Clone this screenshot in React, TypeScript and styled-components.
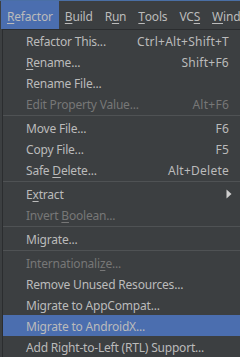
import React from 'react';
import styled, { createGlobalStyle } from 'styled-components';

const GlobalStyle = createGlobalStyle`
  html, body {
    margin: 0;
    padding: 0;
    background: #3c3f41;
    overflow: hidden;
  }
  body {
    width: 240px;
    height: 357px;
    font-family: "Noto Sans", "Noto Sans CJK KR", sans-serif;
    font-size: 12px;
    letter-spacing: -0.2px;
    color: #bbbbbb;
  }
`;

type Entry =
  | { sep: true }
  | { label: string; shortcut?: string; disabled?: boolean; selected?: boolean; submenu?: boolean };

// "&" marks the mnemonic letter
const barMenus = ['&Refactor', '&Build', 'R&un', '&Tools', 'VC&S', '&Window'];

const entries: Entry[] = [
  { label: 'Refactor This...', shortcut: 'Ctrl+Alt+Shift+T' },
  { label: '&Rename...', shortcut: 'Shift+F6' },
  { label: 'Rename File...' },
  { label: 'Edit Property Value...', shortcut: 'Alt+F6', disabled: true },
  { sep: true },
  { label: 'Move File...', shortcut: 'F6' },
  { label: 'Copy File...', shortcut: 'F5' },
  { label: 'Safe &Delete...', shortcut: 'Alt+Delete' },
  { sep: true },
  { label: 'E&xtract', submenu: true },
  { label: 'Invert &Boolean...', disabled: true },
  { sep: true },
  { label: 'Migrate...' },
  { sep: true },
  { label: 'Internationali&ze...', disabled: true },
  { label: 'Remove Unused Resources...' },
  { label: 'Migrate to AppCompat...' },
  { label: 'Migrate to AndroidX...', selected: true },
  { label: 'Add Right-to-Left (RTL) Support...' },
];

const Mnemonic = ({ text }: { text: string }) => {
  const i = text.indexOf('&');
  if (i < 0) return <>{text}</>;
  return (
    <>
      {text.slice(0, i)}
      <Under>{text[i + 1]}</Under>
      {text.slice(i + 2)}
    </>
  );
};

const Arrow = () => (
  <svg width="6" height="10" viewBox="0 0 6 10">
    <path d="M0.5 0.5 L5.5 5 L0.5 9.5 Z" fill="#cfcfcf" />
  </svg>
);

const App = () => {
  return (
    <>
      <GlobalStyle />
      <Screen>
        <MenuBar>
          {barMenus.map((m, i) => (
            <BarItem key={m} $active={i === 0}>
              <Mnemonic text={m} />
            </BarItem>
          ))}
        </MenuBar>
        <Popup>
          {entries.map((e, i) =>
            'sep' in e ? (
              <Separator key={i} />
            ) : (
              <Item key={i} $disabled={e.disabled} $selected={e.selected}>
                <Label>
                  <Mnemonic text={e.label} />
                </Label>
                {e.shortcut && <Shortcut>{e.shortcut}</Shortcut>}
                {e.submenu && (
                  <SubArrow>
                    <Arrow />
                  </SubArrow>
                )}
              </Item>
            )
          )}
        </Popup>
      </Screen>
    </>
  );
};

const Screen = styled.div`
  display: flex;
  flex-direction: column;
  width: 240px;
  height: 357px;
  overflow: hidden;
`;

const MenuBar = styled.div`
  display: flex;
  align-items: stretch;
  height: 28px;
  padding-left: 1px;
  border-top: 1px solid #4a6fa5;
  white-space: nowrap;
  flex-shrink: 0;
  overflow: hidden;
`;

const BarItem = styled.div<{ $active?: boolean }>`
  display: flex;
  align-items: center;
  padding: 2px 6px 0;
  background: ${(p) => (p.$active ? '#4b6eaf' : 'transparent')};
  color: #bbbbbb;
`;

const Under = styled.span`
  text-decoration: underline;
  text-underline-offset: 2px;
`;

const Popup = styled.div`
  display: flex;
  flex-direction: column;
  margin-left: 2px;
  width: 250px;
  flex-shrink: 0;
  border: 1px solid #2b2d2f;
  background: #3c3f41;
`;

const Item = styled.div<{ $disabled?: boolean; $selected?: boolean }>`
  display: flex;
  align-items: center;
  justify-content: space-between;
  height: 21px;
  padding: 1px 24px 0 23px;
  box-sizing: border-box;
  white-space: nowrap;
  background: ${(p) => (p.$selected ? '#4b6eaf' : 'transparent')};
  color: ${(p) => (p.$disabled ? '#777777' : '#bbbbbb')};
`;

const Label = styled.span``;

const Shortcut = styled.span`
  margin-left: 16px;
  letter-spacing: 0.25px;
`;

const SubArrow = styled.span`
  display: flex;
  margin-right: -3px;
`;

const Separator = styled.div`
  height: 1px;
  margin: 1px 0;
  background: #4f5254;
`;

export default App;
